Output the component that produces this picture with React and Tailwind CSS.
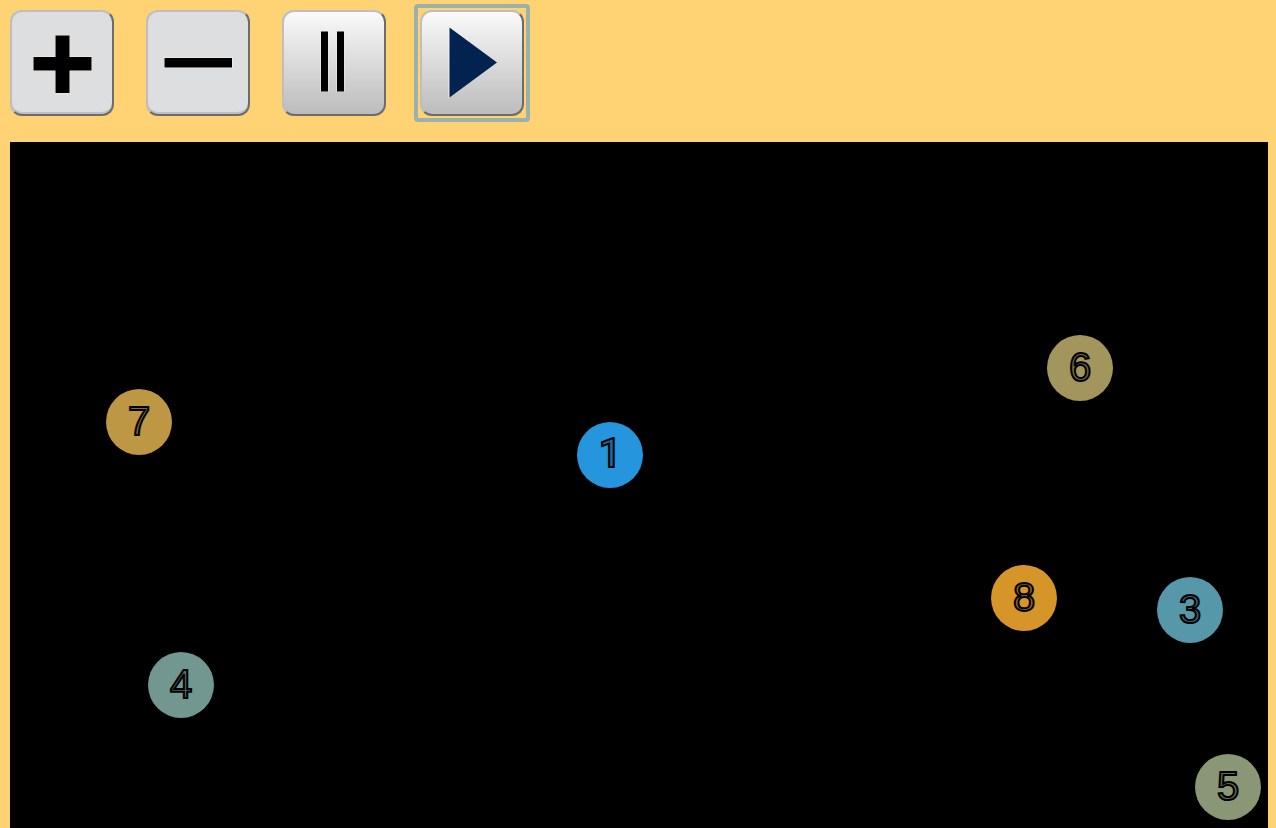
import { useState } from 'react';
import clsx from 'clsx';

const BALLS = [
  { id: 1, left: 567, top: 280, color: 'bg-[#2596de]' },
  { id: 3, left: 1147, top: 435, color: 'bg-[#5797aa]' },
  { id: 4, left: 138, top: 510, color: 'bg-[#729791]' },
  { id: 5, left: 1185, top: 612, color: 'bg-[#8a9777]' },
  { id: 6, left: 1037, top: 193, color: 'bg-[#a3965d]' },
  { id: 7, left: 96, top: 247, color: 'bg-[#bd9743]' },
  { id: 8, left: 981, top: 423, color: 'bg-[#d69529]' },
];

const flat = 'bg-[#dddee0] shadow-[inset_0_-2px_0_#c0c0c2]';
const shaded = 'bg-linear-to-b from-[#fafafa] to-[#bcbcbc]';

function ControlButton({ label, face, onClick, children }) {
  return (
    <button
      type="button"
      aria-label={label}
      onClick={onClick}
      className={clsx(
        'w-[104px] h-[106px] shrink-0 rounded-xl border-2 border-t-[#bebebe] border-l-[#bebebe] border-r-[#6c6c6c] border-b-[#6c6c6c]',
        face
      )}
    >
      <svg viewBox="0 0 100 102" className="block w-full h-full">
        {children}
      </svg>
    </button>
  );
}

function Ball({ id, left, top, color }) {
  return (
    <div
      className={clsx('absolute flex size-[66px] justify-center rounded-full', color)}
      style={{ left, top }}
    >
      <span
        className={clsx(
          'text-[40px] leading-[64px] text-black/30 [-webkit-text-stroke:2px_black]',
          // Roboto draws the 1 without a foot
          id === 1 && "font-['Roboto',sans-serif] font-medium"
        )}
      >
        {id}
      </span>
    </div>
  );
}

export default function App() {
  const [balls, setBalls] = useState(BALLS);
  const [playing, setPlaying] = useState(true);

  const addBall = () => {
    const next = BALLS.find((b) => !balls.includes(b));
    if (next) setBalls([...balls, next]);
  };

  return (
    <div className="flex min-h-screen flex-col bg-[#ffd274] pt-1 pr-2 pl-[10px] font-['Liberation_Sans',Arial,sans-serif]">
      {/* Controls */}
      <div className="flex gap-7 pb-5">
        <div className="flex gap-8 py-[6px]">
          <ControlButton label="Add ball" face={flat} onClick={addBall}>
            <path d="M43.5 23.5h14V45h22v13.5h-22V81h-14V58.5h-22V45h22z" stroke="#f4f4f4" />
            <path d="M43.5 23.5h14V45h22v13.5h-22V81h-14V58.5h-22V45h22z" />
          </ControlButton>
          <ControlButton label="Remove ball" face={flat} onClick={() => setBalls(balls.slice(0, -1))}>
            <rect x="16.5" y="46" width="67.5" height="9.5" stroke="#f8f8f8" />
            <rect x="16.5" y="46" width="67.5" height="9.5" />
          </ControlButton>
          <ControlButton label="Pause" face={shaded} onClick={() => setPlaying(false)}>
            <path d="M37 19.5h7v60h-7zM53 19.5h7v60h-7z" stroke="#f0f0f0" />
            <path d="M37 19.5h7v60h-7zM53 19.5h7v60h-7z" />
          </ControlButton>
        </div>
        <div
          className={clsx(
            'flex rounded-sm border-4 p-[2px]',
            playing ? 'border-[#9bb1ac]' : 'border-transparent'
          )}
        >
          <ControlButton label="Play" face={shaded} onClick={() => setPlaying(true)}>
            <path d="M27 16v70" stroke="#f4f4f4" />
            <path d="M27.5 15.5L75 50.5l-47.5 35z" fill="#02234f" />
          </ControlButton>
        </div>
      </div>

      {/* Ball stage */}
      <main className="relative grow overflow-hidden bg-black">
        {balls.map((ball) => (
          <Ball key={ball.id} {...ball} />
        ))}
      </main>
    </div>
  );
}
